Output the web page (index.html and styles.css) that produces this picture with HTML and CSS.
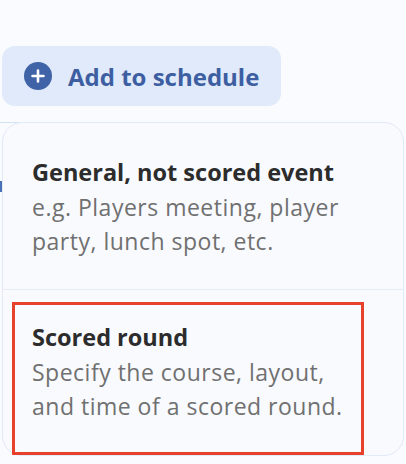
FILE: index.html
```html
<!DOCTYPE html>
<html>
<head>
<meta charset="utf-8">
<link rel="stylesheet" href="styles.css">
</head>
<body>
<div class="page">
  <button class="add-btn">
    <svg class="plus" width="28" height="28" viewBox="0 0 28 28">
      <circle cx="14" cy="14" r="14" fill="#3f63a6"/>
      <path d="M14 8.5v11M8.5 14h11" stroke="#ffffff" stroke-width="2.6" stroke-linecap="round"/>
    </svg>
    <span>Add to schedule</span>
  </button>
  <div class="menu-wrap">
    <div class="menu">
      <div class="option">
        <div class="opt-title">General, not scored event</div>
        <div class="opt-desc">e.g. Players meeting, player party, lunch spot, etc.</div>
      </div>
      <div class="option selected">
        <div class="opt-title">Scored round</div>
        <div class="opt-desc">Specify the course, layout, and time of a scored round.</div>
        <div class="highlight"></div>
      </div>
    </div>
  </div>
</div>
</body>
</html>
```
FILE: styles.css
```css
html, body {
  margin: 0;
  padding: 0;
}
body {
  background: #f9fbfe;
  font-family: "Open Sans", "Noto Sans", sans-serif;
  width: 406px;
  height: 464px;
  overflow: hidden;
}
.page {
  padding: 46px 0 0 2px;
  position: relative;
}
.page::before {
  content: "";
  position: absolute;
  left: 0;
  top: 181px;
  width: 2px;
  height: 11px;
  background: #4a70b8;
}
.add-btn {
  display: flex;
  align-items: center;
  gap: 16px;
  width: 279px;
  height: 60px;
  padding: 0 0 0 22px;
  border: none;
  border-radius: 13px;
  background: #e0eafa;
  color: #3d5fa2;
  font-family: inherit;
  font-size: 24px;
  font-weight: 700;
  box-sizing: border-box;
}
.plus {
  flex: none;
}
.menu-wrap {
  margin-top: 16px;
  position: relative;
}
.menu-wrap::before {
  content: "";
  position: absolute;
  left: -2px;
  top: 0;
  width: 252px;
  height: 1px;
  background: #d5e2f5;
}
.menu {
  position: relative;
  width: 402px;
  box-sizing: border-box;
  border: 1px solid #e1eaf7;
  border-radius: 20px;
  background: #f8fafe;
}
.option {
  padding: 32px 20px 0 29px;
  box-sizing: border-box;
  height: 166px;
  position: relative;
}
.option + .option {
  border-top: 1px solid #e6edf7;
  padding-top: 30px;
}
.opt-title {
  font-size: 23.5px;
  font-weight: 700;
  color: #2c2c2c;
  line-height: 34px;
}
.opt-desc {
  font-size: 23px;
  letter-spacing: 0.5px;
  color: #707070;
  line-height: 34px;
  margin-top: 1px;
  width: 324px;
}
.highlight {
  position: absolute;
  left: 9px;
  top: 12px;
  width: 352px;
  height: 153px;
  box-sizing: border-box;
  border: 3px solid #e8412b;
}
```
